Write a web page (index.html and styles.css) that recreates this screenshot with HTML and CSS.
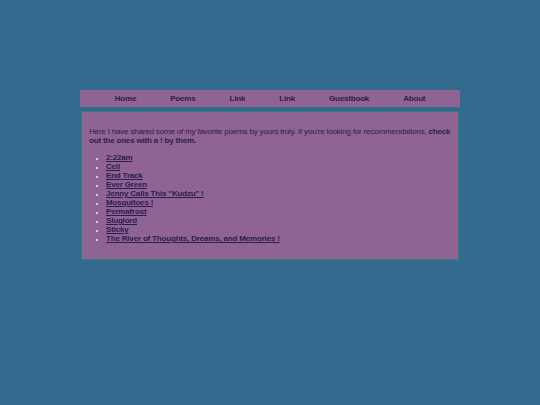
FILE: index.html
```html
<!DOCTYPE html>
<html>
<head>
<meta charset="utf-8">
<link rel="stylesheet" href="styles.css">
</head>
<body>
<div class="wrap">
  <nav class="nav">
    <a href="#">Home</a>
    <a href="#">Poems</a>
    <a href="#">Link</a>
    <a href="#">Link</a>
    <a href="#">Guestbook</a>
    <a href="#">About</a>
  </nav>
  <main class="box">
    <p class="intro">Here I have shared some of my favorite poems by yours truly. If you're looking for recommendations, <b>check</b> <b>out the ones with a ! by them.</b></p>
    <ul class="list">
      <li><a href="#">2:22am</a></li>
      <li><a href="#">Cell</a></li>
      <li><a href="#">End Track</a></li>
      <li><a href="#">Ever Green</a></li>
      <li><a href="#">Jenny Calls This "Kudzu" !</a></li>
      <li><a href="#">Mosquitoes !</a></li>
      <li><a href="#">Permafrost</a></li>
      <li><a href="#">Sluglord</a></li>
      <li><a href="#">Sticky</a></li>
      <li><a href="#">The River of Thoughts, Dreams, and Memories !</a></li>
    </ul>
  </main>
</div>
</body>
</html>
```
FILE: styles.css
```css
html, body {
  margin: 0;
  padding: 0;
}
body {
  background: #336a8e;
  font-family: "Liberation Sans", Arial, sans-serif;
  font-size: 8px;
  letter-spacing: -0.18px;
  color: #2b1d4d;
  height: 405px;
}
.wrap {
  width: 380px;
  margin: 90px auto 0;
}
.nav {
  background: #8f6394;
  height: 17px;
  display: flex;
  justify-content: center;
  align-items: center;
  gap: 34px;
}
.nav a {
  color: #2b1d4d;
  font-weight: bold;
  text-decoration: none;
}
.box {
  margin: 4px 1px 0;
  background: #8f6394;
  border: 1px solid #2e8080;
  padding: 12px 7px 16px;
  min-height: 147px;
  box-sizing: border-box;
}
.intro {
  margin: 3px 0 0;
  line-height: 9px;
}
.list {
  margin: 8px 0 0;
  padding-left: 17px;
  line-height: 9px;
}
.list li::marker {
  color: #f4e8f4;
  font-size: 6px;
}
.list a {
  color: #2b1d4d;
  font-weight: bold;
  text-decoration: underline;
}
```
